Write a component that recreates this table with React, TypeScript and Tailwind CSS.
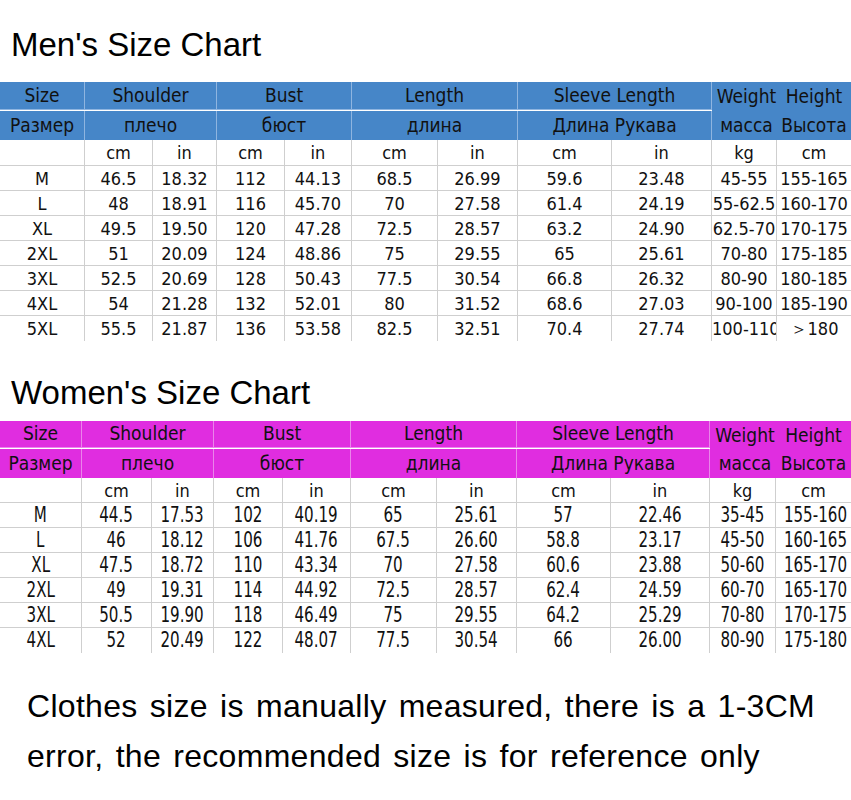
import React from "react";

type Row = string[];

const men: Row[] = [
  ["M", "46.5", "18.32", "112", "44.13", "68.5", "26.99", "59.6", "23.48", "45-55", "155-165"],
  ["L", "48", "18.91", "116", "45.70", "70", "27.58", "61.4", "24.19", "55-62.5", "160-170"],
  ["XL", "49.5", "19.50", "120", "47.28", "72.5", "28.57", "63.2", "24.90", "62.5-70", "170-175"],
  ["2XL", "51", "20.09", "124", "48.86", "75", "29.55", "65", "25.61", "70-80", "175-185"],
  ["3XL", "52.5", "20.69", "128", "50.43", "77.5", "30.54", "66.8", "26.32", "80-90", "180-185"],
  ["4XL", "54", "21.28", "132", "52.01", "80", "31.52", "68.6", "27.03", "90-100", "185-190"],
  ["5XL", "55.5", "21.87", "136", "53.58", "82.5", "32.51", "70.4", "27.74", "100-110", "＞180"],
];

const women: Row[] = [
  ["M", "44.5", "17.53", "102", "40.19", "65", "25.61", "57", "22.46", "35-45", "155-160"],
  ["L", "46", "18.12", "106", "41.76", "67.5", "26.60", "58.8", "23.17", "45-50", "160-165"],
  ["XL", "47.5", "18.72", "110", "43.34", "70", "27.58", "60.6", "23.88", "50-60", "165-170"],
  ["2XL", "49", "19.31", "114", "44.92", "72.5", "28.57", "62.4", "24.59", "60-70", "165-170"],
  ["3XL", "50.5", "19.90", "118", "46.49", "75", "29.55", "64.2", "25.29", "70-80", "170-175"],
  ["4XL", "52", "20.49", "122", "48.07", "77.5", "30.54", "66", "26.00", "80-90", "175-180"],
];

const units = ["", "cm", "in", "cm", "in", "cm", "in", "cm", "in", "kg", "cm"];

type TableProps = {
  data: Row[];
  cols: string;
  head: string;
  line: string;
  rowA: string;
  rowB: string;
  rowC: string;
  narrow?: boolean;
};

const SizeTable = ({ data, cols, head, line, rowA, rowB, rowC, narrow }: TableProps) => {
  const groups = ["Shoulder", "Bust", "Length", "Sleeve Length"];
  const ru = ["плечо", "бюст", "длина", "Длина Рукава"];
  return (
    <div className={`grid ${cols} text-[#111] font-[family-name:'DejaVu_Sans_Condensed','DejaVu_Sans',sans-serif]`}>
      {/* header row 1 */}
      <div className={`${head} ${rowA} border-r border-b ${line} flex items-center justify-center text-[19px]`}>Size</div>
      {groups.map((g) => (
        <div key={g} className={`${head} ${rowA} col-span-2 border-r border-b ${line} flex items-center justify-center text-[19px]`}>
          {g}
        </div>
      ))}
      <div className={`${head} col-span-2 row-span-2 grid grid-cols-subgrid grid-rows-subgrid text-[19px]`}>
        <div className="flex items-center justify-center pl-1">Weight</div>
        <div className="flex items-center justify-center">Height</div>
        <div className="flex items-center justify-center pl-1">масса</div>
        <div className="flex items-center justify-center">Высота</div>
      </div>
      {/* header row 2 */}
      <div className={`${head} ${rowB} border-r ${line} flex items-center justify-center text-[19px]`}>Размер</div>
      {ru.map((g) => (
        <div key={g} className={`${head} ${rowB} col-span-2 border-r ${line} flex items-center justify-center text-[19px]`}>
          {g}
        </div>
      ))}
      {/* units row */}
      {units.map((u, i) => (
        <div
          key={"u" + i}
          className={`${rowC} bg-white border-b border-[#cfcfcf] ${i < 10 ? "border-r" : ""} flex items-center justify-center text-[18px]`}
        >
          {u}
        </div>
      ))}
      {/* data rows */}
      {data.map((r, ri) =>
        r.map((v, i) => (
          <div
            key={ri + "-" + i}
            className={`h-[25px] bg-white border-[#cfcfcf] ${i < 10 ? "border-r" : ""} ${ri < data.length - 1 ? "border-b" : ""} overflow-hidden whitespace-nowrap text-center leading-[25px] ${narrow ? "text-[21px]" : "text-[18px]"}`}
          >
            {narrow ? <span className="inline-block scale-x-[0.8] leading-[25px]">{v}</span> : v}
          </div>
        ))
      )}
    </div>
  );
};

const Title = ({ children }: { children: React.ReactNode }) => (
  <h2 className="pl-[11px] text-[33px] leading-[33px] text-black font-[family-name:'Liberation_Sans',Arial,sans-serif]">
    {children}
  </h2>
);

export default function App() {
  return (
    <div className="w-[851px] h-[800px] bg-white overflow-hidden">
      <div className="pt-[28px] pb-[21px]">
        <Title>Men's Size Chart</Title>
      </div>
      <SizeTable
        data={men}
        cols="grid-cols-[85px_68px_64px_68px_67px_86px_80px_94px_100px_65px_74px]"
        head="bg-[#4686c8]"
        line="border-[#8fb5e0]"
        rowA="h-[28px]"
        rowB="h-[29px]"
        rowC="h-[26px]"
      />
      <div className="pt-[35px] pb-[12px]">
        <Title>Women's Size Chart</Title>
      </div>
      <SizeTable
        data={women}
        cols="grid-cols-[82px_70px_62px_69px_68px_86px_80px_94px_99px_66px_75px]"
        head="bg-[#e02de0]"
        line="border-[#ea84ea]"
        rowA="h-[27px]"
        rowB="h-[29px]"
        rowC="h-[25px]"
        narrow
      />
      <div className="pt-[28px] pl-[27px] text-[32px] leading-[50px] tracking-[0.3px] [word-spacing:3px] text-black font-[family-name:'Liberation_Sans',Arial,sans-serif]">
        <p>Clothes size is manually measured, there is a 1-3CM</p>
        <p>error, the recommended size is for reference only</p>
      </div>
    </div>
  );
}
